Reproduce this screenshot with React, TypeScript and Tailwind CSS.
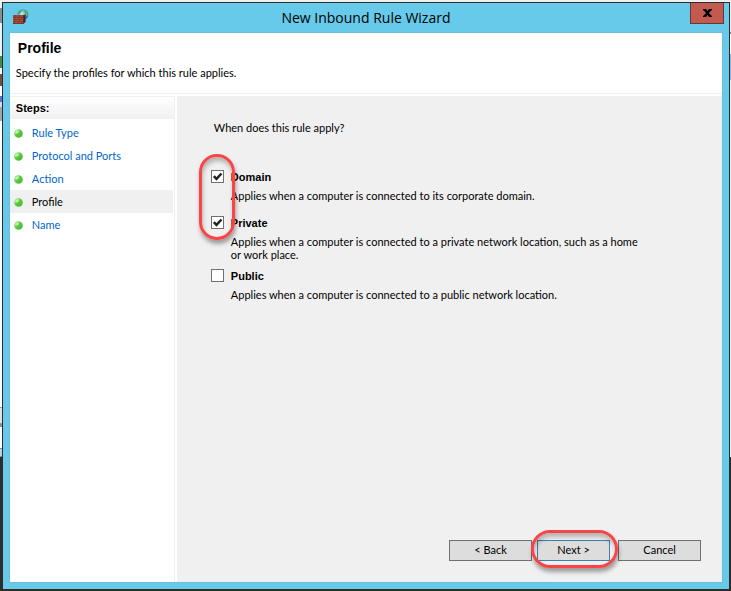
import type { ReactNode } from 'react'

interface Step {
  label: string
  current?: boolean
}

interface ProfileOption {
  id: string
  name: string
  description: string
  checked: boolean
}

const steps: Step[] = [
  { label: 'Rule Type' },
  { label: 'Protocol and Ports' },
  { label: 'Action' },
  { label: 'Profile', current: true },
  { label: 'Name' }
]

const mainProfiles: ProfileOption[] = [
  {
    id: 'domain',
    name: 'Domain',
    description: 'Applies when a computer is connected to its corporate domain.',
    checked: true
  },
  {
    id: 'private',
    name: 'Private',
    description: 'Applies when a computer is connected to a private network location, such as a home or work place.',
    checked: true
  }
]

const publicProfile: ProfileOption = {
  id: 'public',
  name: 'Public',
  description: 'Applies when a computer is connected to a public network location.',
  checked: false
}

function FirewallIcon() {
  return (
    <svg width="16" height="16" viewBox="0 0 16 16" aria-hidden="true">
      <defs>
        <radialGradient id="globe" cx="0.4" cy="0.4" r="0.65">
          <stop offset="0" stopColor="#d4f4ff" />
          <stop offset="0.45" stopColor="#5fb4f0" />
          <stop offset="1" stopColor="#1c56b8" />
        </radialGradient>
      </defs>
      <circle cx="9.8" cy="5.6" r="5.4" fill="url(#globe)" />
      <path d="M5 3.400 7.500 1l1.500.2-.6 1.600L6.500 5H4.800z" fill="#4fae35" />
      <path d="M11.500 1.200l2.200 1.200 1.200 2.600-.8 2.400-1.500-1.200-.6-2.200z" fill="#5cba3a" />
      <path d="M10 15 12.500 13V5.500L10 6.500z" fill="#4a2018" />
      <path d="M0 6h10.500v9H0z" fill="#6b2a20" />
      <path
        d="M0 6.300h2.500v1.500H0zM3.100 6.300h3v1.500h-3zM6.700 6.300h3.400v1.500H6.700zM0 8.400h1.200v1.500H0zM1.800 8.400h3v1.500h-3zM5.400 8.400h3v1.500h-3zM9 8.400h1.200v1.500H9zM0 10.500h2.500V12H0zM3.100 10.500h3V12h-3zM6.700 10.500h3.400V12H6.700zM0 12.600h1.200v1.600H0zM1.800 12.600h3v1.600h-3zM5.400 12.600h3v1.600h-3zM9 12.600h1.200v1.600H9z"
        fill="#b0553f"
      />
    </svg>
  )
}

function StepBullet() {
  return (
    <svg width="9" height="9" viewBox="0 0 9 9" aria-hidden="true" className="shrink-0">
      <defs>
        <linearGradient id="bullet" x1="0" y1="0" x2="1" y2="1">
          <stop offset="0" stopColor="#9ae087" />
          <stop offset="0.5" stopColor="#58cc3c" />
          <stop offset="1" stopColor="#46ac30" />
        </linearGradient>
      </defs>
      <circle cx="4.5" cy="4.5" r="4.3" fill="url(#bullet)" />
      <path d="M1 4.500A3.500 3.500 0 0 1 4.500 1L4.800 3.200 3.200 4.400z" fill="#c4ecb8" />
    </svg>
  )
}

function ProfileCheckbox({ profile }: { profile: ProfileOption }) {
  return (
    <div className="grid grid-cols-[13px_1fr] gap-x-[7px] gap-y-[5px]">
      <span className="relative block size-[13px]">
        <input
          id={profile.id}
          type="checkbox"
          defaultChecked={profile.checked}
          className="peer block size-[13px] appearance-none border border-[#707070] bg-white"
        />
        <svg
          viewBox="0 0 13 13"
          className="pointer-events-none absolute inset-0 hidden size-[13px] peer-checked:block"
          aria-hidden="true"
        >
          <path d="M2.800 6.200 5.500 8.900 10.500 3.500" fill="none" stroke="#212121" strokeWidth="2.400" />
        </svg>
      </span>
      <label htmlFor={profile.id} className="font-['Liberation_Sans',Arial,sans-serif] leading-[14px] font-bold">
        {profile.name}
      </label>
      <p className="col-start-2 leading-[13px]">{profile.description}</p>
    </div>
  )
}

function WizardButton({ children, primary }: { children: ReactNode; primary?: boolean }) {
  return (
    <button
      type="button"
      className={
        primary
          ? 'h-[21px] w-[73px] border border-[#3c7fb1] bg-[#dddddd]'
          : 'h-[21px] w-[83px] border border-[#707070] bg-[#dddddd]'
      }
    >
      {children}
    </button>
  )
}

export default function App() {
  return (
    <div className="flex min-h-screen bg-[#2d2d2d] pb-[2px] font-[Lato,'Liberation_Sans',sans-serif] text-[11px] text-black">
      {/* Window behind, left edge */}
      <div className="flex w-[2px] flex-col bg-white">
        <div className="h-[8px] bg-[#f0f0f0]" />
        <div className="h-[15px] bg-[#8c8c8c]" />
        <div className="h-[33px] bg-[#f0f0f0]" />
        <div className="h-[12px] bg-[#4a8a3c]" />
        <div className="h-[6px] bg-white" />
        <div className="h-[12px] bg-[#7c4a35]" />
        <div className="h-[10px] bg-white" />
        <div className="h-[6px] bg-[#5a74c8]" />
        <div className="h-[5px] bg-[#d8d8e8]" />
        <div className="h-[14px] bg-[#a5a5a5]" />
        <div className="h-[286px] bg-white" />
        <div className="h-[17px] border-y border-[#9a9a9a] bg-[#e2e2e2]" />
        <div className="h-[3px] bg-[#8c8c94]" />
        <div className="h-[21px] bg-white" />
        <div className="h-[9px] border-y border-[#8c8c94] bg-[#bed2e0]" />
        <div className="grow bg-[#2d2d2d]" />
      </div>

      <div className="flex grow flex-col">
        <div className="h-[2px] bg-[#f0f0f0]" />
        <div className="flex grow flex-col border-x border-t border-[#2d2d2d] bg-[#67caea]">
          {/* Title bar */}
          <header className="grid h-[30px] grid-cols-[1fr_auto_1fr] items-start px-[5px]">
            <div className="pt-[6px] pl-[5px]">
              <FirewallIcon />
            </div>
            <h1 className="font-['Open_Sans','Noto_Sans',sans-serif] text-[14px] leading-[30px]">
              New Inbound Rule Wizard
            </h1>
            <button
              type="button"
              aria-label="Close"
              className="flex h-[21px] w-[34px] items-center justify-center justify-self-end border border-t-0 border-[#5f3a3a] bg-[#c25a50]"
            >
              <svg width="9" height="8" viewBox="0 0 9 8" aria-hidden="true">
                <path
                  d="M0 0h3l1.500 2L6 0h3v1L6.200 3.500v1L9 7v1H6L4.500 6 3 8H0V7l2.800-2.500v-1L0 1z"
                  fill="#000"
                />
              </svg>
            </button>
          </header>

          <div className="mx-[7px] mb-[7px] flex grow flex-col bg-white shadow-[0_0_0_1px_#6bbfdc]">
            {/* Page heading */}
            <div className="border-b border-[#f0f0f0] px-[6px] pt-[7px] pb-[13px]">
              <h2 className="px-[2px] font-['Liberation_Sans',Arial,sans-serif] text-[14px] leading-[16px] font-bold">
                Profile
              </h2>
              <p className="mt-[9px] leading-[15px]">Specify the profiles for which this rule applies.</p>
            </div>

            <div className="mt-[2px] flex grow">
              {/* Steps */}
              <nav className="w-[165px] shrink-0 border-t border-r border-[#f0f0f0]">
                <h3 className="h-[22px] bg-linear-to-b from-white to-[#f0f0f0] px-[6px] font-['Liberation_Sans',Arial,sans-serif] leading-[22px] font-bold">
                  Steps:
                </h3>
                <ul className="mt-[2px] mr-[1px]">
                  {steps.map((step) => (
                    <li
                      key={step.label}
                      className={
                        step.current
                          ? 'flex h-[23px] items-center gap-[9px] bg-[#f0f0f0] pt-[2px] pl-1'
                          : 'flex h-[23px] items-center gap-[9px] pt-[2px] pl-1 text-[#0066cc]'
                      }
                    >
                      <StepBullet />
                      {step.current ? <span>{step.label}</span> : <a href="#">{step.label}</a>}
                    </li>
                  ))}
                </ul>
              </nav>

              <main className="ml-[2px] flex grow flex-col justify-between bg-[#f0f0f0] pb-[21px]">
                <form className="pt-[25px] pr-[80px] pl-[34px]">
                  <p className="px-[3px] leading-[14px]">When does this rule apply?</p>

                  <div className="relative mt-[35px] flex flex-col gap-[14px]">
                    {mainProfiles.map((profile) => (
                      <ProfileCheckbox key={profile.id} profile={profile} />
                    ))}
                    {/* Callout round the ticked profiles */}
                    <div className="pointer-events-none absolute -top-4 -left-3 h-[86px] w-[36px] rounded-[18px] border-3 border-[#fb4444] shadow-[1px_4px_4px_rgba(0,0,0,0.35),inset_1px_4px_4px_rgba(0,0,0,0.25)]" />
                  </div>

                  <div className="mt-[8px]">
                    <ProfileCheckbox profile={publicProfile} />
                  </div>
                </form>

                {/* Footer buttons */}
                <div className="flex justify-end pr-[21px]">
                  <WizardButton>&lt; Back</WizardButton>
                  <div className="relative mr-2 ml-[5px]">
                    <WizardButton primary>Next &gt;</WizardButton>
                    <div className="pointer-events-none absolute -top-[10px] -right-[8px] -bottom-[7px] -left-[6px] rounded-[19px] border-3 border-[#fb4444] shadow-[1px_4px_4px_rgba(0,0,0,0.35),inset_1px_4px_4px_rgba(0,0,0,0.25)]" />
                  </div>
                  <WizardButton>Cancel</WizardButton>
                </div>
              </main>
            </div>
          </div>
        </div>
      </div>

      {/* Window behind, right edge */}
      <div className="flex w-px flex-col bg-[#f0f0f0]">
        <div className="h-[32px]" />
        <div className="h-[2px] bg-[#8c8c8c]" />
        <div className="h-[20px] bg-white" />
        <div className="h-[26px] bg-[#92b4dc]" />
        <div className="h-[377px]" />
        <div className="grow bg-[#2d2d2d]" />
      </div>
    </div>
  )
}
